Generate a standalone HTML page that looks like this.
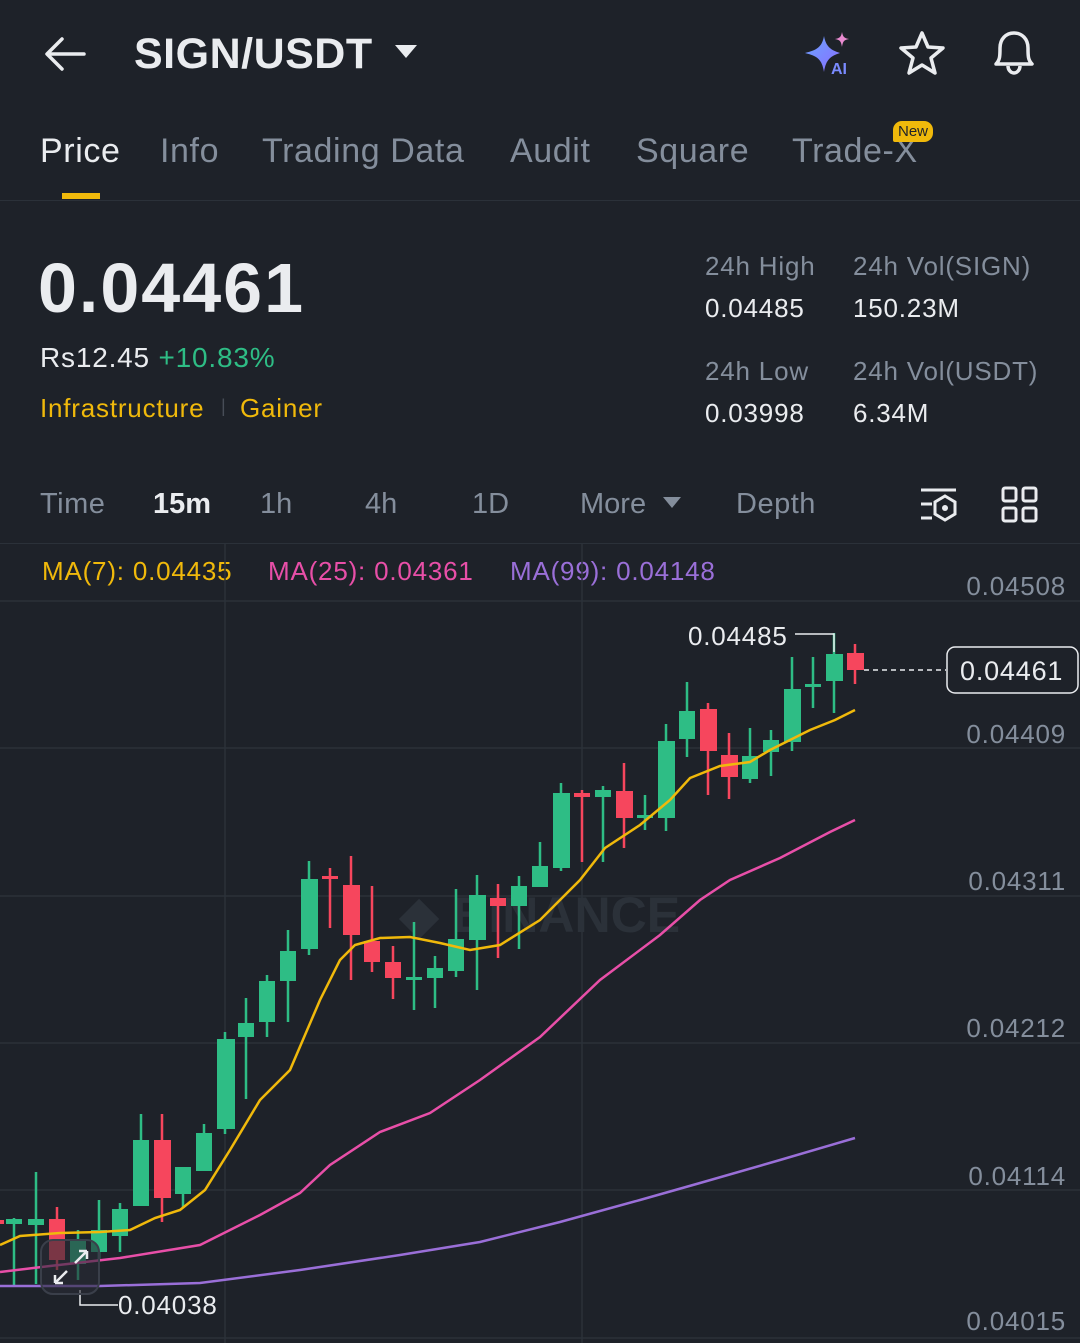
<!DOCTYPE html>
<html><head><meta charset="utf-8"><style>
*{margin:0;padding:0;box-sizing:border-box}
body{width:1080px;height:1343px;background:#1e2229;font-family:"Liberation Sans",sans-serif;color:#eaecef;position:relative;overflow:hidden}
.a{position:absolute;white-space:nowrap}
.g{color:#848e9c}
.t{font-size:34px;letter-spacing:0.6px;top:132px}
.s{font-size:26px;letter-spacing:0.8px}
</style></head><body>
<svg class="a" style="left:42px;top:34px" width="46" height="40" viewBox="0 0 46 40"><path d="M42 20H6M20 5L5 20L20 35" stroke="#eaecef" stroke-width="3.5" fill="none" stroke-linecap="round" stroke-linejoin="round"/></svg>
<div class="a" style="left:134px;top:30px;font-size:43px;font-weight:bold;letter-spacing:0.5px">SIGN/USDT</div>
<svg class="a" style="left:394px;top:44px" width="24" height="16"><path d="M1 1H23L12 14Z" fill="#eaecef"/></svg>
<svg class="a" style="left:804px;top:32px" width="52" height="44" viewBox="0 0 52 44"><defs><linearGradient id="ai" x1="0" y1="0" x2="1" y2="1"><stop offset="0" stop-color="#6aa5ff"/><stop offset="1" stop-color="#8a6cff"/></linearGradient></defs><path d="M20 4C22 15 27 18 36 21C27 24 22 27 20 40C18 27 13 24 1 21C13 18 18 15 20 4Z" fill="url(#ai)"/><path d="M38 0C39 5 40 6 45 7C40 8 39 9 38 15C37 9 36 8 31 7C36 6 37 5 38 0Z" fill="#e98bd0"/><text x="27" y="42" font-size="16" font-weight="bold" fill="#7a8bff" font-family="Liberation Sans">AI</text></svg>
<svg class="a" style="left:898px;top:30px" width="48" height="46" viewBox="0 0 48 46"><path d="M24 3L30 17L45 18L33 28L37 43L24 35L11 43L15 28L3 18L18 17Z" stroke="#eaecef" stroke-width="3.5" fill="none" stroke-linejoin="round"/></svg>
<svg class="a" style="left:990px;top:28px" width="48" height="50" viewBox="0 0 48 50"><path d="M6 36C10 32 10 28 10 20C10 11 16 5 24 5C32 5 38 11 38 20C38 28 38 32 42 36Z M18 38C18 42 21 45 24 45C27 45 30 42 30 38" stroke="#eaecef" stroke-width="3.5" fill="none" stroke-linejoin="round"/></svg>
<div class="a t" style="left:40px">Price</div>
<div class="a" style="left:62px;top:193px;width:38px;height:6px;background:#f0b90b"></div>
<div class="a g t" style="left:160px">Info</div>
<div class="a g t" style="left:262px">Trading Data</div>
<div class="a g t" style="left:510px">Audit</div>
<div class="a g t" style="left:636px">Square</div>
<div class="a g t" style="left:792px">Trade-X</div>
<div class="a" style="left:893px;top:121px;background:#f0b90b;color:#1e2229;font-size:15px;padding:2px 5px;border-radius:9px 9px 9px 2px">New</div>
<div class="a" style="left:0;top:200px;width:1080px;height:1px;background:#2b3139"></div>
<div class="a" style="left:38px;top:248px;font-size:70px;font-weight:bold;letter-spacing:2px">0.04461</div>
<div class="a" style="left:40px;top:342px;font-size:28px;letter-spacing:0.8px">Rs12.45 <span style="color:#2ebd85">+10.83%</span></div>
<div class="a s" style="left:40px;top:393px;color:#f0b90b">Infrastructure</div>
<div class="a" style="left:221px;top:396px;color:#474d57;font-size:18px">|</div>
<div class="a s" style="left:240px;top:393px;color:#f0b90b">Gainer</div>
<div class="a g s" style="left:705px;top:251px">24h High</div>
<div class="a s" style="left:705px;top:293px">0.04485</div>
<div class="a g s" style="left:853px;top:251px">24h Vol(SIGN)</div>
<div class="a s" style="left:853px;top:293px">150.23M</div>
<div class="a g s" style="left:705px;top:356px">24h Low</div>
<div class="a s" style="left:705px;top:398px">0.03998</div>
<div class="a g s" style="left:853px;top:356px">24h Vol(USDT)</div>
<div class="a s" style="left:853px;top:398px">6.34M</div>
<div class="a g" style="left:40px;top:488px;font-size:29px;letter-spacing:0.5px">Time</div>
<div class="a" style="left:153px;top:488px;font-size:29px;font-weight:bold">15m</div>
<div class="a g" style="left:260px;top:488px;font-size:29px">1h</div>
<div class="a g" style="left:365px;top:488px;font-size:29px">4h</div>
<div class="a g" style="left:472px;top:488px;font-size:29px">1D</div>
<div class="a g" style="left:580px;top:488px;font-size:29px">More</div>
<svg class="a" style="left:662px;top:496px" width="20" height="14"><path d="M1 1H19L10 12Z" fill="#848e9c"/></svg>
<div class="a g" style="left:736px;top:488px;font-size:29px;letter-spacing:0.5px">Depth</div>
<svg class="a" style="left:918px;top:486px" width="42" height="38" viewBox="0 0 42 38"><path d="M3 4H38M3 18H14M3 32H14" stroke="#eaecef" stroke-width="3"/><path d="M27 10L37 16V28L27 34L17 28V16Z" stroke="#eaecef" stroke-width="3" fill="none"/><circle cx="27" cy="22" r="3" fill="#eaecef"/></svg>
<svg class="a" style="left:1001px;top:486px" width="38" height="38" viewBox="0 0 38 38"><g stroke="#eaecef" stroke-width="3" fill="none"><rect x="2" y="2" width="13" height="13" rx="2"/><rect x="22" y="2" width="13" height="13" rx="2"/><rect x="2" y="22" width="13" height="13" rx="2"/><rect x="22" y="22" width="13" height="13" rx="2"/></g></svg>
<div class="a" style="left:0;top:543px;width:1080px;height:1px;background:#2b3139"></div>
<div class="a s" style="left:42px;top:556px;color:#f0b90b">MA(7): 0.04435</div>
<div class="a s" style="left:268px;top:556px;color:#e84fa8">MA(25): 0.04361</div>
<div class="a s" style="left:510px;top:556px;color:#9a6fd8">MA(99): 0.04148</div>
<svg class="a" style="left:0;top:0" width="1080" height="1343">
<g stroke="#2b3139" stroke-width="1.5"><path d="M0 601H1080M0 748H1080M0 896H1080M0 1043H1080M0 1190H1080M0 1338H1080M225 544V1343M582 544V1343"/></g>
<text x="540" y="932" font-size="50" font-weight="bold" fill="#2b3139" text-anchor="middle" font-family="Liberation Sans">◆ BINANCE</text>
<g font-size="26" fill="#848e9c" text-anchor="end" font-family="Liberation Sans" letter-spacing="0.8"><text x="1066" y="595">0.04508</text><text x="1066" y="743">0.04409</text><text x="1066" y="890">0.04311</text><text x="1066" y="1037">0.04212</text><text x="1066" y="1185">0.04114</text><text x="1066" y="1330">0.04015</text></g>
<g fill="#2ebd85" stroke="#2ebd85" stroke-width="2.5">
<path d="M14 1218V1285M36 1172V1284M78 1230V1280M99 1200V1260M120 1203V1252M141 1114V1206M183 1167V1208M204 1124V1171M225 1032V1134M246 998V1099M267 975V1037M288 930V1022M309 861V955M414 922V1010M435 956V1008M456 889V977M477 875V990M519 876V949M540 842V887M561 783V871M603 786V862M645 795V830M666 724V831M687 682V757M750 728V783M771 730V776M792 657V751M813 657V708M834 633V713"/>
<g stroke="none"><rect x="6" y="1219" width="16" height="5"/><rect x="28" y="1219" width="16" height="6"/><rect x="70" y="1240" width="16" height="24"/><rect x="91" y="1230" width="16" height="22"/><rect x="112" y="1209" width="16" height="27"/><rect x="133" y="1140" width="16" height="66"/><rect x="175" y="1167" width="16" height="27"/><rect x="196" y="1133" width="16" height="38"/><rect x="217" y="1039" width="18" height="90"/><rect x="238" y="1023" width="16" height="14"/><rect x="259" y="981" width="16" height="41"/><rect x="280" y="951" width="16" height="30"/><rect x="301" y="879" width="17" height="70"/><rect x="406" y="977" width="16" height="3"/><rect x="427" y="968" width="16" height="10"/><rect x="448" y="939" width="16" height="32"/><rect x="469" y="895" width="17" height="45"/><rect x="511" y="886" width="16" height="20"/><rect x="532" y="866" width="16" height="21"/><rect x="553" y="793" width="17" height="75"/><rect x="595" y="790" width="16" height="7"/><rect x="637" y="815" width="16" height="3"/><rect x="658" y="741" width="17" height="77"/><rect x="679" y="711" width="16" height="28"/><rect x="742" y="756" width="16" height="23"/><rect x="763" y="740" width="16" height="12"/><rect x="784" y="689" width="17" height="53"/><rect x="805" y="684" width="16" height="3"/><rect x="826" y="654" width="17" height="27"/></g></g>
<g fill="#f6465d" stroke="#f6465d" stroke-width="2.5">
<path d="M57 1207V1270M162 1114V1222M330 868V928M351 856V980M372 886V972M393 946V999M498 884V958M582 790V862M624 763V848M708 703V795M729 733V799M855 644V684"/>
<g stroke="none"><rect x="0" y="1220" width="4" height="4"/><rect x="49" y="1219" width="16" height="41"/><rect x="154" y="1140" width="17" height="58"/><rect x="322" y="876" width="16" height="3"/><rect x="343" y="885" width="17" height="50"/><rect x="364" y="941" width="16" height="21"/><rect x="385" y="962" width="16" height="16"/><rect x="490" y="898" width="16" height="8"/><rect x="574" y="793" width="16" height="4"/><rect x="616" y="791" width="17" height="27"/><rect x="700" y="709" width="17" height="42"/><rect x="721" y="755" width="17" height="22"/><rect x="847" y="653" width="17" height="17"/></g></g>
<polyline fill="none" stroke="#f0b90b" stroke-width="2.5" points="0,1245 20,1236 60,1233 100,1232 130,1230 155,1218 180,1210 205,1190 230,1150 260,1100 290,1070 320,1000 340,960 355,945 380,938 410,937 440,943 470,950 500,945 540,920 580,880 605,848 640,825 670,800 690,778 720,766 750,762 770,750 790,740 810,730 835,720 855,710"/>
<polyline fill="none" stroke="#e84fa8" stroke-width="2.5" points="0,1272 50,1266 120,1258 200,1245 260,1215 300,1193 330,1165 380,1132 430,1113 480,1080 540,1037 600,980 660,935 700,900 730,880 780,858 830,832 855,820"/>
<polyline fill="none" stroke="#9a6fd8" stroke-width="2.5" points="0,1286 100,1286 200,1283 300,1270 400,1255 480,1242 560,1222 640,1200 700,1183 780,1160 855,1138"/>
<path d="M795 634H834V652" stroke="#eaecef" stroke-width="1.5" fill="none"/>
<text x="688" y="645" font-size="26" fill="#eaecef" font-family="Liberation Sans" letter-spacing="0.8">0.04485</text>
<path d="M80 1290V1305H118" stroke="#eaecef" stroke-width="1.5" fill="none"/>
<text x="118" y="1314" font-size="26" fill="#eaecef" font-family="Liberation Sans" letter-spacing="0.8">0.04038</text>
<path d="M864 670H946" stroke="#eaecef" stroke-width="1.5" stroke-dasharray="5,4"/>
<rect x="947" y="647" width="131" height="46" rx="8" fill="#1e2229" stroke="#eaecef" stroke-width="1.5"/>
<text x="960" y="680" font-size="27" fill="#eaecef" font-family="Liberation Sans" letter-spacing="0.8">0.04461</text>
<rect x="41" y="1240" width="58" height="54" rx="12" fill="rgba(40,44,54,0.6)" stroke="#3a3f4a" stroke-width="2"/>
<path d="M55 1283L67 1271M55 1283H63M55 1283V1275M87 1251L75 1263M87 1251H79M87 1251V1259" stroke="#eaecef" stroke-width="2.5" fill="none"/>
</svg>
</body></html>
